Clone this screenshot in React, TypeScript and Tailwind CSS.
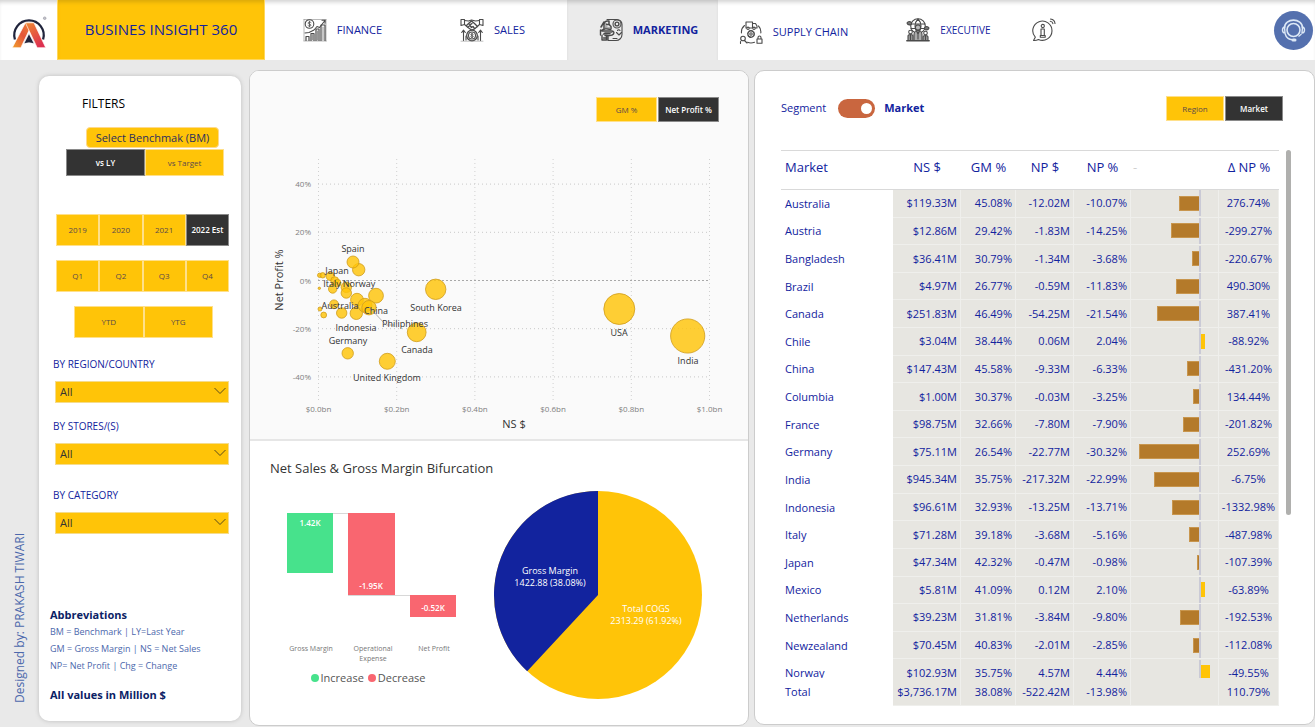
import type { ReactNode } from "react";

const YEARS = ["2019", "2020", "2021", "2022 Est"];
const QUARTERS = ["Q1", "Q2", "Q3", "Q4"];

type Row = { market: string; ns: string; gm: string; np: string; pct: number; delta: string };

const ROWS: Row[] = [
  { market: "Australia", ns: "$119.33M", gm: "45.08%", np: "-12.02M", pct: -10.07, delta: "276.74%" },
  { market: "Austria", ns: "$12.86M", gm: "29.42%", np: "-1.83M", pct: -14.25, delta: "-299.27%" },
  { market: "Bangladesh", ns: "$36.41M", gm: "30.79%", np: "-1.34M", pct: -3.68, delta: "-220.67%" },
  { market: "Brazil", ns: "$4.97M", gm: "26.77%", np: "-0.59M", pct: -11.83, delta: "490.30%" },
  { market: "Canada", ns: "$251.83M", gm: "46.49%", np: "-54.25M", pct: -21.54, delta: "387.41%" },
  { market: "Chile", ns: "$3.04M", gm: "38.44%", np: "0.06M", pct: 2.04, delta: "-88.92%" },
  { market: "China", ns: "$147.43M", gm: "45.58%", np: "-9.33M", pct: -6.33, delta: "-431.20%" },
  { market: "Columbia", ns: "$1.00M", gm: "30.37%", np: "-0.03M", pct: -3.25, delta: "134.44%" },
  { market: "France", ns: "$98.75M", gm: "32.66%", np: "-7.80M", pct: -7.9, delta: "-201.82%" },
  { market: "Germany", ns: "$75.11M", gm: "26.54%", np: "-22.77M", pct: -30.32, delta: "252.69%" },
  { market: "India", ns: "$945.34M", gm: "35.75%", np: "-217.32M", pct: -22.99, delta: "-6.75%" },
  { market: "Indonesia", ns: "$96.61M", gm: "32.93%", np: "-13.25M", pct: -13.71, delta: "-1332.98%" },
  { market: "Italy", ns: "$71.28M", gm: "39.18%", np: "-3.68M", pct: -5.16, delta: "-487.98%" },
  { market: "Japan", ns: "$47.34M", gm: "42.32%", np: "-0.47M", pct: -0.98, delta: "-107.39%" },
  { market: "Mexico", ns: "$5.81M", gm: "41.09%", np: "0.12M", pct: 2.1, delta: "-63.89%" },
  { market: "Netherlands", ns: "$39.23M", gm: "31.81%", np: "-3.84M", pct: -9.8, delta: "-192.53%" },
  { market: "Newzealand", ns: "$70.45M", gm: "40.83%", np: "-2.01M", pct: -2.85, delta: "-112.08%" },
  { market: "Norway", ns: "$102.93M", gm: "35.75%", np: "4.57M", pct: 4.44, delta: "-49.55%" },
];

/* ---------- icons ---------- */

function Logo() {
  return (
    <svg viewBox="0 0 110 110" className="size-[36px]" aria-label="Company logo" role="img">
      <defs>
        <linearGradient id="legLeft" x1="0" y1="1" x2="1" y2="0">
          <stop offset="0" stopColor="#f2a02c" />
          <stop offset="0.5" stopColor="#e4553a" />
          <stop offset="1" stopColor="#f08a30" />
        </linearGradient>
        <linearGradient id="legRight" x1="0" y1="0" x2="0.6" y2="1">
          <stop offset="0" stopColor="#f08a30" />
          <stop offset="1" stopColor="#dc3050" />
        </linearGradient>
      </defs>
      <path d="M12 84A45 45 0 1 1 98 84" fill="none" stroke="#20243c" strokeWidth="7" />
      <path d="M44 33h22L30 109H4z" fill="url(#legLeft)" stroke="#fff" strokeWidth="2" />
      <path d="M44 33h26l36 76H80z" fill="url(#legRight)" stroke="#fff" strokeWidth="2" />
      <path d="M55 66l16 31q-16-6-32 0z" fill="#20243c" stroke="#fff" strokeWidth="2" />
      <circle cx="103" cy="19" r="4" fill="#c4c4cc" stroke="#9a9aa5" strokeWidth="2" />
    </svg>
  );
}

function LineIcon({ children }: { children: ReactNode }) {
  return (
    <svg
      viewBox="0 0 24 24"
      className="size-[24px] shrink-0"
      fill="none"
      stroke="#4a4a4a"
      strokeWidth="1.1"
      strokeLinecap="round"
      strokeLinejoin="round"
      aria-hidden="true"
    >
      {children}
    </svg>
  );
}

const FinanceIcon = () => (
  <LineIcon>
    <path d="M1 1.500h22M1 1.500v21M0.800 23h22.400M23 1.500V23" stroke="#8a8a8a" strokeWidth="0.600" />
    <circle cx="6.500" cy="6" r="4.300" />
    <path d="M8 4.500c-.8-.8-3-.6-3 .6s3 .8 3 2-2.200 1.400-3 .5M6.500 3.300v5.400" strokeWidth="0.800" />
    <path d="M2 15l4-.5 5-2.500 3-3.500 2.500 1L22 2.500M19 2.300l3.200-.1-.2 3" />
    <path d="M3 22.500v-4h3v4M8 22.500v-7h3v7M13 22.500V11h3v11.500M18 22.500V7h4v15.500" strokeWidth="1.200" />
    <path d="M9.500 16.500v5M14.500 13v9M20 9v13" stroke="#999" />
  </LineIcon>
);

const SalesIcon = () => (
  <LineIcon>
    <path d="M1 1.500h3.500v5L1 7.500zM23 1.500h-3.500v5l3.500 1z" />
    <path d="M4.500 2.500l4 .5 3-1 4 1 4-.5M4.500 6.500L8 9.500l3.500 2.500 3-1 5-4.500" />
    <path d="M8.500 5.500l3-2.500 3 2.500 3 3M8.500 5.500c1 1.500 2.500 1 3.500 0M8 9l2-1.500 1.500 2 1.500-1 1.500 2M6.500 7.500L8 6" strokeWidth="1.300" />
    <circle cx="12" cy="17.500" r="5.300" strokeWidth="1.300" />
    <circle cx="12" cy="17.500" r="3.500" />
    <path d="M13.200 16.300c-.7-.8-2.400-.5-2.400.4s2.400.8 2.400 1.800-1.700 1.200-2.500.3M12 15.200v4.600" strokeWidth="0.900" />
    <path d="M3.500 22.500V12.500M1.700 14.500l1.800-2.300 1.800 2.300M6 22v-4M20.500 22.500V12.500M18.700 14.500l1.800-2.300 1.800 2.300M18 22v-4" />
    <path d="M1 23.200h22" stroke="#999" strokeWidth="0.600" />
  </LineIcon>
);

const MarketingIcon = () => (
  <LineIcon>
    <path d="M8 1.500h10a5 5 0 0 1 5 5v10a6 6 0 0 1-6 6H9" />
    <circle cx="18" cy="6" r="4" />
    <circle cx="18" cy="6" r="1.900" strokeWidth="1.400" />
    <path d="M5 11V6.500A3.500 3.500 0 0 1 8.500 3H10v3.500l2 2V11M7 6c1 1 2.500.5 3.500.5M2 9l3-5M2.500 12.500l4-2 5 1" strokeWidth="1.500" />
    <path d="M3 13h9.500c2 0 3 1.500 2 3s-2 1.500-4 1.500H6M1.500 12v5M3 17.500v4.500h4.500V18M5 15.500h6M4.500 20h3M9 18v4" strokeWidth="1.400" />
    <path d="M17.500 14.500l2.500 2.500 2.500-2.500M18.500 12.500c.4-1 2-1 2.500 0M14 20.500h4" />
    <path d="M4 8h4M5.500 10h6M6 14.500h7M4 16.500h4" stroke="#777" />
  </LineIcon>
);

const SupplyIcon = () => (
  <LineIcon>
    <path d="M7 2h6.500v6H7zM13.500 3.500h3l1.500 2.500v2h-4.500" />
    <circle cx="9" cy="8.300" r="1.200" fill="#fff" />
    <circle cx="15" cy="8.300" r="1.200" fill="#fff" />
    <circle cx="12" cy="14" r="3.200" strokeDasharray="1.600 0.900" strokeWidth="1.500" />
    <circle cx="12" cy="14" r="1.200" />
    <path d="M5.500 5.500C3.300 7.300 2.200 10 2.500 13M19.500 6c2 2 2.600 4.500 2.300 7M8.500 22.300c2.200.9 4.700.9 7 0" />
    <circle cx="4" cy="18.500" r="2.300" />
    <path d="M5.500 20.500l2.500 2.500M1.500 21.500v2M18 19h5v4.300h-5zM19 19v-1.500c0-2 3-2 3 0V19" />
  </LineIcon>
);

const ExecutiveIcon = () => (
  <LineIcon>
    <circle cx="12" cy="8" r="7.300" />
    <path d="M5 6h14M5 10.500h14M12 1c-4 4-4 10 0 14M12 1c4 4 4 10 0 14" />
    <circle cx="12" cy="9.500" r="2.600" fill="#bbb" />
    <path d="M8 22.500v-6c0-2.500 2-4 4-4s4 1.500 4 4v6M10.500 13l1.500 3 1.500-3M12 16v5" fill="#aaa" />
    <path d="M1 5c1-2 4-2 4.500 0S2 8 1 5zM23 10c-1-2-4-2-4.500 0s3.500 3 4.500 0z" fill="#777" />
    <circle cx="4.500" cy="14" r="1.800" />
    <circle cx="19.500" cy="15" r="1.800" />
    <path d="M2 22.500V18c0-2 5-2 5 0v4.500M17 22.500V19c0-2 5-2 5 0v3.500M4.500 17v5M19.500 18v4" fill="#999" />
    <path d="M0.800 22.800h22.400" strokeWidth="1.400" />
  </LineIcon>
);

const InfoIcon = () => (
  <LineIcon>
    <path d="M1.500 22.500l1.800-3.300A9.600 9.600 0 1 1 6.500 21.500c-1.500.8-3.300 1.200-5 1z" />
    <circle cx="10.800" cy="8" r="1.600" />
    <path d="M9 11h3.300v6.500H9zM8.300 19.200h4.900v-1.700H8.300z" />
    <path d="M18.500 1c2.700.3 4.300 2 4.500 4.500M18.300 3.300c1.600.2 2.400 1 2.600 2.400" />
  </LineIcon>
);

function HeadsetIcon() {
  return (
    <svg viewBox="0 0 39 39" className="size-[39px]" fill="none" stroke="#dce8f6" aria-hidden="true">
      <circle cx="19.500" cy="19" r="6.500" strokeWidth="1.600" />
      <path d="M10.500 17C10.500 6.500 28.500 6.500 28.500 17" strokeWidth="1.600" />
      <path d="M10.500 16c-1.500.3-2 1.500-2 3s.8 3 2.500 3zM28.500 16c1.500.3 2 1.500 2 3s-.8 3-2.500 3z" strokeWidth="1.400" />
      <path d="M11 22.500c1 3.500 3.500 6 7.500 6.300" strokeWidth="1.400" />
      <rect x="17.500" y="27.500" width="5" height="3" rx="1.500" fill="#dce8f6" stroke="none" />
      <path d="M24.500 25.500l3-2.500" strokeWidth="1.200" />
    </svg>
  );
}

/* ---------- header ---------- */

function NavItem({ icon, label, className = "" }: { icon: ReactNode; label: string; className?: string }) {
  return (
    <a href="#" className={`flex h-full w-[151px] items-center justify-center gap-2.5 ${className}`}>
      {icon}
      <span>{label}</span>
    </a>
  );
}

function Header() {
  return (
    <header className="flex h-[60px] items-center bg-white shadow-[inset_0_4px_4px_-2px_#d0d0d0]">
      <div className="flex w-[57px] justify-center">
        <Logo />
      </div>
      <h1 className="flex h-full w-[208px] items-center justify-center border border-t-0 border-[#ffd75a] bg-[#ffc408] text-[15px] text-[#12239e] shadow-[inset_0_4px_4px_-2px_#d9a70a]">
        BUSINES INSIGHT 360
      </h1>
      <nav className="flex h-full flex-1 items-center text-[11px] text-[#12239e]">
        <NavItem icon={<FinanceIcon />} label="FINANCE" className="pl-1" />
        <NavItem icon={<SalesIcon />} label="SALES" className="pl-0.5" />
        <NavItem
          icon={<MarketingIcon />}
          label="MARKETING"
          className="bg-[#ebebeb] pl-3 font-bold shadow-[inset_0_4px_4px_-2px_#c0c0c0]"
        />
        <NavItem icon={<SupplyIcon />} label="SUPPLY CHAIN" className="pt-1" />
        <NavItem icon={<ExecutiveIcon />} label="EXECUTIVE" className="pl-2 text-[10px]" />
        <a href="#" aria-label="Information" className="ml-3">
          <InfoIcon />
        </a>
      </nav>
      <button type="button" aria-label="Support" className="mr-0.5 rounded-full bg-[#5470ae]">
        <HeadsetIcon />
      </button>
    </header>
  );
}

/* ---------- controls ---------- */

function Tile({ label, active = false }: { label: string; active?: boolean }) {
  const tone = active
    ? "border-[#8a8a8a] bg-[#333333] font-semibold text-white"
    : "border-[#ffe08a] bg-[#ffc408] text-[#5b4a4a]";
  return (
    <button
      type="button"
      aria-pressed={active}
      className={`flex min-w-0 flex-1 items-center justify-center border text-[8px] whitespace-nowrap ${tone}`}
    >
      {label}
    </button>
  );
}

function Dropdown({ id, label, className = "" }: { id: string; label: string; className?: string }) {
  return (
    <div className={`flex flex-col ${className}`}>
      <label htmlFor={id} className="text-[10px] leading-4 text-[#12239e]">
        {label}
      </label>
      <div className="relative mt-[9px] ml-0.5">
        <select
          id={id}
          className="block h-[22px] w-full appearance-none border border-[#f5dc8c] bg-[#ffc408] px-1 text-[11px] text-[#333333]"
        >
          <option>All</option>
        </select>
        <svg
          viewBox="0 0 12 8"
          className="pointer-events-none absolute top-[6px] right-[3px] h-2 w-3"
          fill="none"
          stroke="#5a4a1a"
          aria-hidden="true"
        >
          <path d="M0.500 1l5.500 5.500L11.500 1" />
        </svg>
      </div>
    </div>
  );
}

function Filters() {
  return (
    <aside className="mt-4 mb-[5px] flex w-[202px] shrink-0 flex-col rounded-[10px] bg-white pr-3 pl-[11px] shadow-[0_0_4px_#bdbdbd]">
      <h2 className="mt-5 ml-8 text-[12px] leading-4 text-black">FILTERS</h2>
      <div className="mt-[15px] mr-2.5 ml-9 h-[21px] rounded-[4px] border border-[#ffd98a] bg-[#ffc408] text-center text-[11px] leading-[20px] text-[#2b2f5e]">
        Select Benchmak (BM)
      </div>
      <div className="mt-px mr-[5px] ml-4 flex h-[27px]">
        <Tile label="vs LY" active />
        <Tile label="vs Target" />
      </div>
      <div className="mt-[38px] ml-1.5 flex h-8">
        {YEARS.map((y) => (
          <Tile key={y} label={y} active={y === "2022 Est"} />
        ))}
      </div>
      <div className="mt-3.5 ml-1.5 flex h-8">
        {QUARTERS.map((q) => (
          <Tile key={q} label={q} />
        ))}
      </div>
      <div className="mt-3.5 mr-4 ml-6 flex h-8">
        <Tile label="YTD" />
        <Tile label="YTG" />
      </div>
      <div className="ml-[3px] flex flex-col">
        <Dropdown id="region" label="BY REGION/COUNTRY" className="mt-[18px]" />
        <Dropdown id="stores" label="BY STORES/(S)" className="mt-[15px]" />
        <Dropdown id="category" label="BY CATEGORY" className="mt-[22px]" />
      </div>
      <div className="mt-[72px] text-[9px] leading-[17px] text-[#4c68ac]">
        <h3 className="text-[11px] font-bold text-[#0b2265]">Abbreviations</h3>
        <p>BM = Benchmark | LY=Last Year</p>
        <p>GM = Gross Margin | NS = Net Sales</p>
        <p>NP= Net Profit | Chg = Change</p>
        <p className="mt-3 text-[11px] font-bold text-[#0b2265]">All values in Million $</p>
      </div>
    </aside>
  );
}

/* ---------- charts ---------- */

const BUBBLES: [number, number, number][] = [
  [69.7, 125.3, 2.5],
  [72.7, 125.3, 3],
  [80.3, 126.3, 4.5],
  [84.7, 130.7, 4.3],
  [87.3, 133, 4],
  [69.3, 138.3, 1.5],
  [82.7, 139, 4.5],
  [96.3, 137.3, 5.5],
  [96.3, 143, 5.5],
  [108.7, 119.7, 6.5],
  [103, 112, 6.3],
  [126, 145.7, 7.7],
  [107, 149.7, 6.7],
  [84, 154.3, 4.7],
  [70, 159, 2.3],
  [73.7, 165, 3.2],
  [91.7, 163, 5.5],
  [106.3, 163.3, 6.5],
  [115, 155.3, 7.3],
  [119, 157.7, 7.5],
  [97.7, 203.3, 6],
  [137.3, 211.3, 8.3],
  [166.7, 182.3, 9.7],
  [185.7, 139.3, 10.5],
  [369.3, 159, 15.8],
  [437.7, 186, 17.4],
];

const BUBBLE_LABELS: [string, number, number][] = [
  ["Spain", 103, 102],
  ["Japan", 87, 124],
  ["Italy", 82, 137],
  ["Norway", 109, 137],
  ["Australia", 90, 159],
  ["China", 126, 164],
  ["Philiphines", 155, 177],
  ["Indonesia", 106, 181],
  ["Germany", 98, 194],
  ["Canada", 167, 203],
  ["United Kingdom", 137, 231],
  ["South Korea", 186, 161],
  ["USA", 369, 186],
  ["India", 438, 214],
];

function ScatterChart() {
  const xs = [0, 0.2, 0.4, 0.6, 0.8, 1];
  const ys = [40, 20, 0, -20, -40];
  return (
    <svg viewBox="0 0 498 289" className="block w-full" role="img" aria-label="Net Profit % by NS $">
      {xs.map((v) => {
        const x = 68.5 + v * 391;
        return (
          <g key={v}>
            <line x1={x} x2={x} y1="9" y2="252" stroke="#d0d0d0" strokeDasharray="1 3" />
            <text x={x} y="262" textAnchor="middle" fontSize="8" fill="#808080">{`$${v.toFixed(1)}bn`}</text>
          </g>
        );
      })}
      {ys.map((v) => {
        const y = 130.5 - v * 2.41;
        return (
          <g key={v}>
            <line
              x1="68"
              x2="460"
              y1={y}
              y2={y}
              stroke={v === 0 ? "#a8a8a8" : "#c8c8c8"}
              strokeDasharray={v === 0 ? "2 2" : "1 3"}
            />
            <text x="61" y={y + 3} textAnchor="end" fontSize="8" fill="#808080">{`${v}%`}</text>
          </g>
        );
      })}
      <g fill="#ffc408" fillOpacity="0.82" stroke="#cf9c1c" strokeOpacity="0.8">
        {BUBBLES.map(([x, y, r]) => (
          <circle key={`${x}-${y}`} cx={x} cy={y} r={r - 0.3} />
        ))}
      </g>
      <path d="M119 157l17 18h8" fill="none" stroke="#b5b5b5" />
      <g fontSize="9" fill="#333333" textAnchor="middle">
        {BUBBLE_LABELS.map(([label, x, y]) => (
          <text key={label} x={x} y={y}>
            {label}
          </text>
        ))}
      </g>
      <text x="264" y="278" textAnchor="middle" fontSize="11" fill="#333333">
        NS $
      </text>
      <text transform="translate(33 130) rotate(-90)" textAnchor="middle" fontSize="11" fill="#333333">
        Net Profit %
      </text>
    </svg>
  );
}

function WaterfallChart() {
  return (
    <svg viewBox="0 0 236 180" className="block w-full" role="img" aria-label="Gross margin to net profit">
      <path d="M37 23.500h108M98 105.500h108" stroke="#d8d8d8" />
      <rect x="37" y="23" width="46" height="60" fill="#47e28c" />
      <rect x="98" y="23" width="47" height="82" fill="#f96670" />
      <rect x="160" y="105" width="46" height="22" fill="#f96670" />
      <g fontSize="8" fill="#ffffff" fontWeight="600" textAnchor="middle">
        <text x="60" y="36">1.42K</text>
        <text x="121" y="99">-1.95K</text>
        <text x="183" y="121">-0.52K</text>
      </g>
      <g fontSize="7" fill="#777777" textAnchor="middle">
        <text x="61" y="161">Gross Margin</text>
        <text x="123" y="161">Operational</text>
        <text x="123" y="171">Expense</text>
        <text x="184" y="161">Net Profit</text>
      </g>
    </svg>
  );
}

function PieChart() {
  return (
    <svg viewBox="0 0 262 235" className="block w-full" role="img" aria-label="Gross margin and total COGS">
      <circle cx="112" cy="105" r="104" fill="#ffc408" />
      <path d="M112 105V1A104 104 0 0 0 41.200 181.200z" fill="#12239e" />
      <g fontSize="9" fill="#ffffff" textAnchor="middle">
        <text x="64" y="84">Gross Margin</text>
        <text x="64" y="96">1422.88 (38.08%)</text>
        <text x="160" y="122">Total COGS</text>
        <text x="160" y="134">2313.29 (61.92%)</text>
      </g>
    </svg>
  );
}

function ChartsPanel() {
  return (
    <section className="mt-2.5 flex flex-col overflow-hidden rounded-[10px] border border-[#cccccc] bg-white">
      <div className="flex flex-col border-b-2 border-[#e6e6e6] bg-[#fafafa]">
        <div className="mt-[26px] mr-[29px] flex h-[25px] w-[123px] gap-px self-end">
          <Tile label="GM %" />
          <Tile label="Net Profit %" active />
        </div>
        <div className="mt-7">
          <ScatterChart />
        </div>
      </div>
      <h2 className="mt-[17px] ml-5 text-[13px] leading-5 text-[#333333]">Net Sales &amp; Gross Margin Bifurcation</h2>
      <div className="mt-3 flex">
        <div className="min-w-0 flex-[236]">
          <WaterfallChart />
          <ul className="flex justify-center gap-1 text-[11px] leading-4 text-[#555555]">
            <li className="flex items-center gap-0.5">
              <span className="size-2 rounded-full bg-[#47e28c]" />
              Increase
            </li>
            <li className="flex items-center gap-0.5">
              <span className="size-2 rounded-full bg-[#f96670]" />
              Decrease
            </li>
          </ul>
        </div>
        <div className="min-w-0 flex-[262]">
          <PieChart />
        </div>
      </div>
    </section>
  );
}

/* ---------- table ---------- */

function VarianceBar({ value }: { value: number }) {
  const width = Math.max(2, Math.round(Math.abs(value) * 1.97));
  return (
    <div className="flex h-[26px] items-center">
      <div className="flex w-[68px] justify-end">
        {value < 0 && <span className="h-[15px] border border-r-0 border-[#c8964e] bg-[#b47a2a]" style={{ width }} />}
      </div>
      <div className="flex h-full flex-1 items-center border-l-2 border-[#cacad6]">
        {value > 0 && <span className="h-[15px] bg-[#ffc408]" style={{ width }} />}
      </div>
    </div>
  );
}

const CELL = "border-r border-b border-[#efefec] bg-[#e7e6e1] p-0";

function MarketTable() {
  return (
    <div className="flex">
      <div className="h-[556px] min-w-0 flex-1 overflow-hidden">
        <table className="h-[565px] w-full table-fixed border-separate border-spacing-0 text-[11px] leading-4 text-[#12239e]">
          <colgroup>
            <col />
            <col className="w-[68px]" />
            <col className="w-[55px]" />
            <col className="w-[58px]" />
            <col className="w-[57px]" />
            <col className="w-[88px]" />
            <col className="w-[60px]" />
          </colgroup>
          <thead>
            <tr className="h-10 text-[13px] [&>th]:border-y [&>th]:border-[#d9d9d9] [&>th]:p-0 [&>th]:pb-1.5 [&>th]:font-normal">
              <th scope="col" className="text-left">
                <span className="pl-1">Market</span>
              </th>
              <th scope="col">NS $</th>
              <th scope="col">GM %</th>
              <th scope="col">NP $</th>
              <th scope="col">NP %</th>
              <th scope="col" className="text-left text-[#d0d0d0]">
                <span className="pl-0.5">-</span>
              </th>
              <th scope="col">Δ NP %</th>
            </tr>
          </thead>
          <tbody>
            {ROWS.map((r) => (
              <tr key={r.market}>
                <th scope="row" className="p-0 pl-1 text-left font-normal">
                  {r.market}
                </th>
                <td className={`${CELL} text-right`}>
                  <span className="pr-[3px]">{r.ns}</span>
                </td>
                <td className={`${CELL} text-right`}>
                  <span className="pr-[3px]">{r.gm}</span>
                </td>
                <td className={`${CELL} text-right`}>
                  <span className="pr-[3px]">{r.np}</span>
                </td>
                <td className={`${CELL} text-right`}>
                  <span className="pr-[3px]">{r.pct.toFixed(2)}%</span>
                </td>
                <td className={CELL}>
                  <VarianceBar value={r.pct} />
                </td>
                <td className={`${CELL} text-center`}>{r.delta}</td>
              </tr>
            ))}
          </tbody>
          <tfoot className="sticky bottom-0">
            <tr className="h-7">
              <th scope="row" className="bg-white p-0 pl-1 text-left font-normal">
                Total
              </th>
              <td className={`${CELL} text-right font-medium`}>
                <span className="pr-[3px]">$3,736.17M</span>
              </td>
              <td className={`${CELL} text-right font-medium`}>
                <span className="pr-[3px]">38.08%</span>
              </td>
              <td className={`${CELL} text-right font-medium`}>
                <span className="pr-[3px]">-522.42M</span>
              </td>
              <td className={`${CELL} text-right font-medium`}>
                <span className="pr-[3px]">-13.98%</span>
              </td>
              <td className={CELL} />
              <td className={`${CELL} text-center font-medium`}>110.79%</td>
            </tr>
          </tfoot>
        </table>
      </div>
      <div className="ml-[7px] h-[365px] w-[5px] rounded-full bg-[#b0b0ae]" />
    </div>
  );
}

function MarketPanel() {
  return (
    <section className="mt-2.5 mb-px flex flex-col rounded-[10px] border border-[#cccccc] bg-white pr-[23px] pl-[26px]">
      <div className="mt-[25px] mb-[29px] flex h-[25px] items-center text-[11px] text-[#12239e]">
        <span>Segment</span>
        <input
          type="checkbox"
          role="switch"
          defaultChecked
          aria-label="Switch between segment and market"
          className="mr-[9px] ml-3 flex h-[19px] w-[37px] appearance-none items-center justify-end rounded-full bg-[#c9663f] pr-[3px] before:size-[11px] before:rounded-full before:bg-white"
        />
        <span className="font-bold">Market</span>
        <div className="mr-[8px] ml-auto flex h-[25px] w-[117px] gap-px">
          <Tile label="Region" />
          <Tile label="Market" active />
        </div>
      </div>
      <MarketTable />
    </section>
  );
}

export default function App() {
  return (
    <div className="flex min-h-screen flex-col bg-[#e9e9e9] font-['Open_Sans','Noto_Sans',sans-serif]">
      <Header />
      <main className="flex flex-1 pb-px">
        <div className="flex w-[39px] shrink-0 items-end justify-center pb-[23px]">
          <p className="rotate-180 text-[12px] leading-4 whitespace-nowrap text-[#4c68ac] [writing-mode:vertical-rl]">
            Designed by: PRAKASH TIWARI
          </p>
        </div>
        <Filters />
        <div className="ml-2 grid flex-1 grid-cols-[minmax(0,500fr)_minmax(0,561fr)] gap-x-[5px]">
          <ChartsPanel />
          <MarketPanel />
        </div>
      </main>
    </div>
  );
}
